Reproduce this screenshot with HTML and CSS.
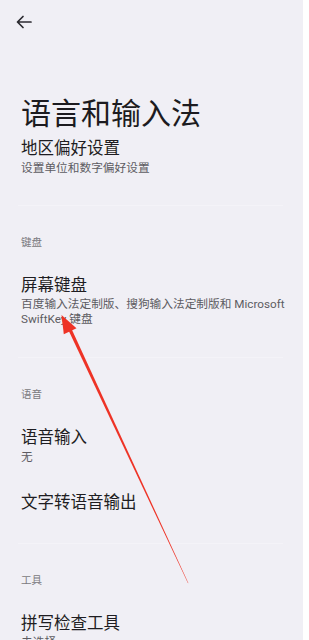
FILE: index.html
```html
<!DOCTYPE html>
<html lang="zh-CN">
<head>
<meta charset="utf-8">
<title>语言和输入法</title>
<link rel="stylesheet" href="styles.css">
</head>
<body>
<div class="screen">
  <header class="topbar">
    <svg class="back" width="16" height="14" viewBox="0 0 16 14" aria-label="返回">
      <path d="M15 7H1.6M7 1.5L1.5 7L7 12.5" fill="none" stroke="#2b2a30" stroke-width="1.7" stroke-linecap="round" stroke-linejoin="round"/>
    </svg>
  </header>

  <h1 class="title">语言和输入法</h1>

  <section class="group group-first">
    <div class="item item-first">
      <div class="item-title">地区偏好设置</div>
      <div class="item-summary">设置单位和数字偏好设置</div>
    </div>
  </section>

  <div class="divider"></div>

  <section class="group">
    <div class="group-label">键盘</div>
    <div class="item">
      <div class="item-title">屏幕键盘</div>
      <div class="item-summary">百度输入法定制版、搜狗输入法定制版和 Microsoft SwiftKey 键盘</div>
    </div>
  </section>

  <div class="divider"></div>

  <section class="group">
    <div class="group-label">语音</div>
    <div class="item">
      <div class="item-title">语音输入</div>
      <div class="item-summary">无</div>
    </div>
    <div class="item">
      <div class="item-title">文字转语音输出</div>
    </div>
  </section>

  <div class="divider"></div>

  <section class="group">
    <div class="group-label">工具</div>
    <div class="item">
      <div class="item-title">拼写检查工具</div>
      <div class="item-summary">未选择</div>
    </div>
  </section>

  <svg class="annotation" width="303" height="640" viewBox="0 0 303 640">
    <polygon points="61.5,315 76.5,328.2 63.8,334.2" fill="#ee3326"/>
    <polygon points="68.6,330.6 71.7,329.2 188.3,583 188,583.2" fill="#ee3326"/>
  </svg>
</div>
</body>
</html>
```

FILE: styles.css
```css
html {
  background: #ffffff;
}

body {
  margin: 0;
  width: 309px;
  height: 640px;
  overflow: hidden;
  background: #ffffff;
}

.screen {
  position: relative;
  width: 303px;
  height: 640px;
  overflow: hidden;
  background: #f0eff5;
  font-family: Roboto, "Noto Sans CJK SC", sans-serif;
  color: #1e1d22;
}

.topbar {
  height: 44px;
  display: flex;
  align-items: center;
  padding-left: 16px;
}

.back {
  display: block;
}

.title {
  margin: 52px 0 0;
  padding: 0 21px;
  font-size: 30px;
  line-height: 36px;
  font-weight: 400;
  color: #1c1b20;
}

.group {
  padding: 30px 0 16px;
}

.group-first {
  padding: 0 0 15px;
}

.group-label {
  padding: 0 21px;
  font-size: 10.5px;
  line-height: 14px;
  color: #7b7a80;
  margin-bottom: 12px;
}

.item {
  padding: 14px 18px 14px 21px;
}

.item-first {
  padding-top: 7px;
}

.item-title {
  font-size: 16.5px;
  line-height: 20px;
  color: #1e1d22;
}

.item-summary {
  margin-top: 1.5px;
  font-size: 11.7px;
  line-height: 15px;
  color: #5d5c62;
}

.divider {
  height: 1px;
  margin: 0 20px 0 18px;
  background: #f4f3f8;
}

.annotation {
  position: absolute;
  left: 0;
  top: 0;
  pointer-events: none;
}
```
